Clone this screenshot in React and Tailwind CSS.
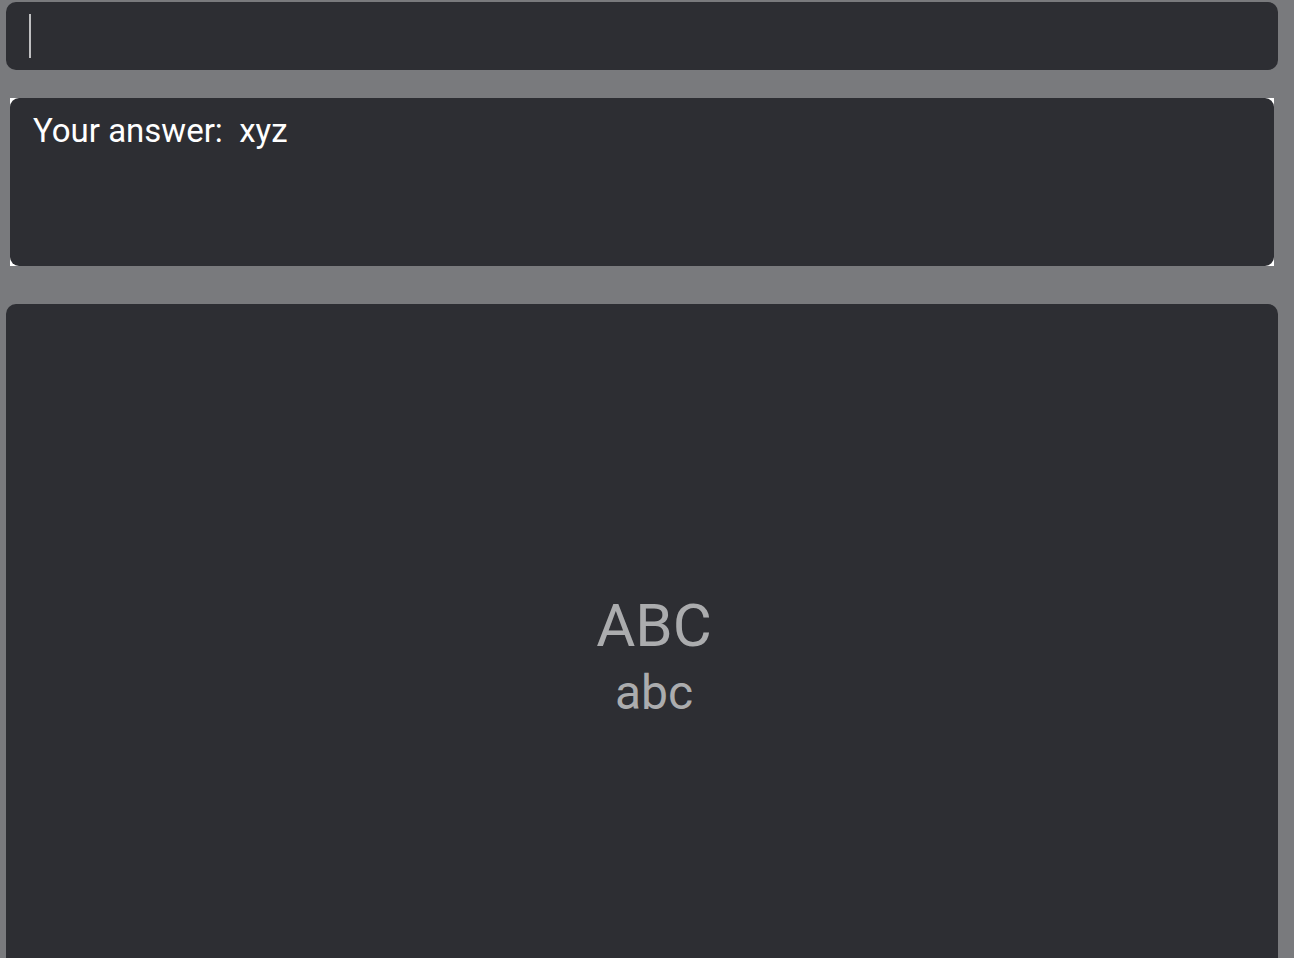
export default function App() {
  return (
    <main className="flex min-h-screen flex-col bg-[#797a7d] pt-0.5 pr-4 pl-1.5 font-['Roboto','Inter',sans-serif]">
      <label className="flex h-17 items-center rounded-[10px] bg-[#2d2e33] pr-6 pl-[23px]">
        <span aria-hidden="true" className="h-11 w-0.5 shrink-0 bg-[#bfbfc1]" />
        <input
          type="text"
          aria-label="Your answer"
          className="h-full min-w-0 flex-1 bg-transparent text-4xl text-white caret-transparent outline-none"
        />
      </label>

      <section className="mx-1 mt-7 bg-white">
        <div className="h-42 rounded-[9px] bg-[#2d2e33] px-[23px] pt-3">
          <p className="text-[33px] leading-[42px] whitespace-pre text-white">{'Your answer:  xyz'}</p>
        </div>
      </section>

      <section className="mt-[38px] flex flex-1 flex-col items-center justify-center rounded-t-[10px] bg-[#2d2e33] pt-[52px] pl-6 text-[#abacae]">
        <h1 className="text-[60px] leading-[72px]">ABC</h1>
        <p className="text-5xl leading-[62px]">abc</p>
      </section>
    </main>
  );
}
